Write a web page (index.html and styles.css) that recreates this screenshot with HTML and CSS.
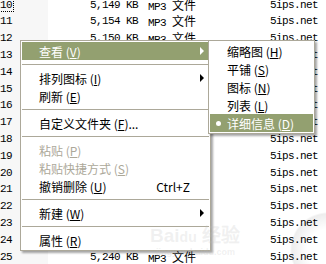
FILE: index.html
```html
<!DOCTYPE html>
<html lang="zh-CN">
<head>
    <meta charset="UTF-8">
    <title>查看菜单</title>
    <link rel="stylesheet" href="styles.css">
</head>
<body>
    <div class="list">
        <div class="row"><span class="name"><span class="focus">10</span></span><span class="size">5,149 KB</span><span class="type">MP3 <span class="zh">文件</span></span><span class="site">5ips.net</span></div>
        <div class="row"><span class="name">11</span><span class="size">5,154 KB</span><span class="type">MP3 <span class="zh">文件</span></span><span class="site">5ips.net</span></div>
        <div class="row"><span class="name">12</span><span class="size">5,150 KB</span><span class="type">MP3 <span class="zh">文件</span></span><span class="site">5ips.net</span></div>
        <div class="row"><span class="name">13</span><span class="size">5,162 KB</span><span class="type">MP3 <span class="zh">文件</span></span><span class="site">5ips.net</span></div>
        <div class="row"><span class="name">14</span><span class="size">5,170 KB</span><span class="type">MP3 <span class="zh">文件</span></span><span class="site">5ips.net</span></div>
        <div class="row"><span class="name">15</span><span class="size">5,171 KB</span><span class="type">MP3 <span class="zh">文件</span></span><span class="site">5ips.net</span></div>
        <div class="row"><span class="name">16</span><span class="size">5,180 KB</span><span class="type">MP3 <span class="zh">文件</span></span><span class="site">5ips.net</span></div>
        <div class="row"><span class="name">17</span><span class="size">5,184 KB</span><span class="type">MP3 <span class="zh">文件</span></span><span class="site">5ips.net</span></div>
        <div class="row"><span class="name">18</span><span class="size">5,190 KB</span><span class="type">MP3 <span class="zh">文件</span></span><span class="site">5ips.net</span></div>
        <div class="row"><span class="name">19</span><span class="size">5,196 KB</span><span class="type">MP3 <span class="zh">文件</span></span><span class="site">5ips.net</span></div>
        <div class="row"><span class="name">20</span><span class="size">5,201 KB</span><span class="type">MP3 <span class="zh">文件</span></span><span class="site">5ips.net</span></div>
        <div class="row"><span class="name">21</span><span class="size">5,208 KB</span><span class="type">MP3 <span class="zh">文件</span></span><span class="site">5ips.net</span></div>
        <div class="row"><span class="name">22</span><span class="size">5,215 KB</span><span class="type">MP3 <span class="zh">文件</span></span><span class="site">5ips.net</span></div>
        <div class="row"><span class="name">23</span><span class="size">5,221 KB</span><span class="type">MP3 <span class="zh">文件</span></span><span class="site">5ips.net</span></div>
        <div class="row"><span class="name">24</span><span class="size">5,233 KB</span><span class="type">MP3 <span class="zh">文件</span></span><span class="site">5ips.net</span></div>
        <div class="row"><span class="name">25</span><span class="size">5,240 KB</span><span class="type">MP3 <span class="zh">文件</span></span><span class="site">5ips.net</span></div>
    </div>

    <!-- 右键菜单 -->
    <div class="menu main">
        <div class="item hl">查看 (<u>V</u>)<span class="arrow"></span></div>
        <div class="sep"></div>
        <div class="item">排列图标 (<u>I</u>)<span class="arrow"></span></div>
        <div class="item">刷新 (<u>E</u>)</div>
        <div class="sep"></div>
        <div class="item">自定义文件夹 (<u>F</u>)...</div>
        <div class="sep"></div>
        <div class="item off">粘贴 (<u>P</u>)</div>
        <div class="item off">粘贴快捷方式 (<u>S</u>)</div>
        <div class="item">撤销删除 (<u>U</u>)<span class="key">Ctrl+Z</span></div>
        <div class="sep"></div>
        <div class="item">新建 (<u>W</u>)<span class="arrow"></span></div>
        <div class="sep"></div>
        <div class="item">属性 (<u>R</u>)</div>
    </div>

    <!-- 查看子菜单 -->
    <div class="menu sub">
        <div class="item">缩略图 (<u>H</u>)</div>
        <div class="item">平铺 (<u>S</u>)</div>
        <div class="item">图标 (<u>N</u>)</div>
        <div class="item">列表 (<u>L</u>)</div>
        <div class="item hl checked">详细信息 (<u>D</u>)</div>
    </div>

    <div class="watermark">
        <div class="wm-logo">Bai<span class="wm-du">du</span> 经验</div>
        <div class="wm-url">jingyan.baidu.com</div>
    </div>
    <div class="ball"></div>
</body>
</html>
```

FILE: styles.css
```css
html, body {
    height: 264px;
}
body {
    margin: 0;
    background: #fff;
    overflow: hidden;
    font-family: "Noto Sans CJK SC", sans-serif;
    font-size: 12px;
    color: #000;
}
.list {
    margin-top: -3.4px;
    height: 267px;
    overflow: hidden;
}
.row {
    display: grid;
    grid-template-columns: 48px 90px 132px 1fr;
    height: 16.8px;
    line-height: 16.8px;
    font-family: "Liberation Mono", "Noto Sans CJK SC", monospace;
    font-size: 11px;
    letter-spacing: -0.6px;
    white-space: nowrap;
}
.name {
    background: #f7f7f7;
}
.focus {
    outline: 1px dotted #000;
    padding: 0 1px 0 0;
}
.size {
    text-align: right;
}
.type {
    padding-left: 10px;
}
.zh {
    font-family: "Noto Sans CJK SC", sans-serif;
    font-size: 12px;
    letter-spacing: 0;
}

.menu {
    position: absolute;
    top: 40px;
    background: #fff;
    border: 1px solid #aca899;
    padding: 1px;
    box-shadow: 2px 2px 2px rgba(0,0,0,0.35);
}
.main {
    left: 20px;
    width: 187px;
}
.sub {
    left: 208px;
    width: 103px;
}
.item {
    display: flex;
    align-items: center;
    position: relative;
    height: 18px;
    padding-left: 17px;
    white-space: nowrap;
}
.item u {
    text-underline-offset: 1px;
}
.hl {
    background: #93a070;
    color: #fff;
}
.off {
    color: #aca899;
}
.sep {
    height: 1px;
    margin: 4px 0;
    background: #aca899;
}
.arrow {
    margin-left: auto;
    margin-right: 5px;
    width: 0;
    height: 0;
    border-top: 4px solid transparent;
    border-bottom: 4px solid transparent;
    border-left: 4px solid currentColor;
}
.key {
    margin-left: auto;
    padding-right: 19px;
}
.checked::before {
    content: "";
    position: absolute;
    left: 6px;
    top: 7px;
    width: 5px;
    height: 5px;
    border-radius: 50%;
    background: #fff;
}

.watermark {
    position: absolute;
    left: 150px;
    top: 226px;
    color: rgba(190,190,190,0.22);
    pointer-events: none;
}
.wm-logo {
    font-family: "Liberation Sans", sans-serif;
    font-size: 19px;
    font-weight: bold;
    line-height: 20px;
}
.wm-du {
    font-size: 14px;
}
.wm-url {
    font-family: "Liberation Sans", sans-serif;
    font-size: 9px;
    font-weight: bold;
    line-height: 11px;
    margin-left: 6px;
}
.ball {
    position: absolute;
    left: 290px;
    top: 208px;
    width: 36px;
    height: 56px;
    background: radial-gradient(circle 38px at 38px 42px, rgba(255,255,255,0) 55%, rgba(0,0,0,0.07) 95%, rgba(0,0,0,0) 100%);
}
```
